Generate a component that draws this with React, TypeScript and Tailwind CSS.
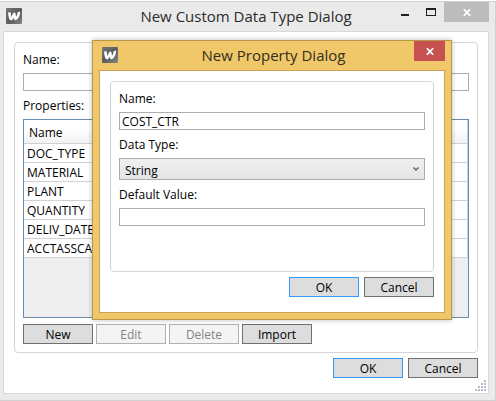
import React, { useState } from "react";

const propertyNames = ["DOC_TYPE", "MATERIAL", "PLANT", "QUANTITY", "DELIV_DATE", "ACCTASSCAT"];

function AppLogo() {
  return (
    <svg width="16" height="16" viewBox="0 0 16 16" aria-hidden="true" className="shrink-0">
      <defs>
        <linearGradient id="logoShade" x1="0" y1="0" x2="1" y2="1">
          <stop offset="0" stopColor="#77777a" />
          <stop offset="0.5" stopColor="#5c5c5f" />
          <stop offset="1" stopColor="#858588" />
        </linearGradient>
      </defs>
      <rect width="16" height="16" rx="1" fill="url(#logoShade)" />
      <path
        d="M2 4.6 L4.6 4.2 L5.4 9 L7.4 4.8 L9.4 4.8 L10 8.8 C11 7.6 11.4 6 11.6 4.2 L14.2 3.4 C14 7.6 12.4 11 9.8 12.2 C8.8 12.4 8.2 11.6 7.9 9.4 C7.2 11 6.2 12.3 4.8 12.3 C3 12.3 2.4 8.4 2 4.6 Z"
        fill="#fff"
        strokeLinejoin="round"
      />
    </svg>
  );
}

function CloseGlyph() {
  return (
    <svg width="8" height="7" viewBox="0 0 8 7" aria-hidden="true">
      <path d="M0.8 0.2 L7.2 6.8 M7.2 0.2 L0.8 6.8" stroke="#fff" strokeWidth="1.7" />
    </svg>
  );
}

type ButtonProps = { children: React.ReactNode; primary?: boolean; disabled?: boolean };

function DialogButton({ children, primary, disabled }: ButtonProps) {
  const look = disabled
    ? "border-[#adb2b5] bg-[#f4f4f4] text-[#838383]"
    : primary
      ? "border-[#3399ff] bg-[#dddddd] text-black"
      : "border-[#707070] bg-[#dddddd] text-black";
  return (
    <button
      type="button"
      disabled={disabled}
      className={`flex h-5 w-[70px] items-center justify-center border pt-0.5 leading-4 ${look}`}
    >
      {children}
    </button>
  );
}

function TextField({ id, label, initial = "" }: { id: string; label: string; initial?: string }) {
  const [value, setValue] = useState(initial);
  return (
    <>
      <label htmlFor={id} className="block h-7 leading-[30px]">
        {label}
      </label>
      <input
        id={id}
        type="text"
        value={value}
        onChange={(e) => setValue(e.target.value)}
        className="block h-[18px] w-full border border-[#abadb3] bg-white px-0.5 leading-4 outline-none"
      />
    </>
  );
}

function PropertyDialog() {
  return (
    <section
      role="dialog"
      aria-label="New Property Dialog"
      className="absolute top-10 right-11 left-[92px] flex flex-col border border-[#b8964a] bg-[#f0c869] shadow-[0_0_5px_rgba(0,0,0,0.25)]"
    >
      <header className="grid h-[29px] grid-cols-[1fr_auto_1fr] items-start pr-1.5 pl-[9px]">
        <div className="pt-1.5">
          <AppLogo />
        </div>
        <h2 className="text-[15px] leading-7 text-[#332d20]">New Property Dialog</h2>
        <button
          type="button"
          aria-label="Close"
          className="flex h-5 w-[31px] items-center justify-center justify-self-end bg-[#c75050]"
        >
          <CloseGlyph />
        </button>
      </header>
      <div className="mx-1.5 mb-1.5 border border-[#c9a456] bg-white p-2.5 pb-[15px]">
        <div className="rounded border border-[#d5d5d5] px-2 pt-0.5 pb-[45px]">
          <TextField id="property-name" label="Name:" initial="COST_CTR" />
          <label htmlFor="data-type" className="block h-7 leading-[30px]">
            Data Type:
          </label>
          <div className="grid">
            <select
              id="data-type"
              className="col-start-1 row-start-1 h-[22px] w-full appearance-none border border-[#acacac] bg-linear-to-b from-[#f0f0f0] to-[#e5e5e5] pt-0.5 pl-[5px] leading-5 outline-none"
            >
              <option>String</option>
            </select>
            <svg
              width="6"
              height="4"
              viewBox="0 0 6 4"
              aria-hidden="true"
              className="pointer-events-none col-start-1 row-start-1 mr-1.5 self-center justify-self-end"
            >
              <path d="M0.5 0.5 L3 3 L5.5 0.5" fill="none" stroke="#606060" strokeWidth="1.4" />
            </svg>
          </div>
          <TextField id="default-value" label="Default Value:" />
        </div>
        <div className="mt-[5px] flex justify-end gap-[5px]">
          <DialogButton primary>OK</DialogButton>
          <DialogButton>Cancel</DialogButton>
        </div>
      </div>
    </section>
  );
}

function ResizeGrip() {
  const dots = [
    [9, 0],
    [6, 3],
    [9, 3],
    [3, 6],
    [6, 6],
    [9, 6],
    [0, 9],
    [3, 9],
    [6, 9],
    [9, 9],
  ];
  return (
    <svg
      width="11"
      height="11"
      viewBox="0 0 11 11"
      aria-hidden="true"
      className="absolute right-0.5 bottom-0.5"
    >
      {dots.map(([x, y]) => (
        <rect key={`${x}-${y}`} x={x} y={y} width="2" height="2" fill="#b8bfcc" />
      ))}
    </svg>
  );
}

export default function App() {
  return (
    <div className="relative flex min-h-screen flex-col bg-white pt-px font-['Open_Sans','Noto_Sans',sans-serif] text-[12px] leading-4 text-black">
      <main className="flex flex-1 flex-col border-t border-r border-b border-[#d0d0d0] bg-[#eaeaea] pr-1.5 pb-1.5 pl-[3px]">
        <header className="grid h-[29px] grid-cols-[1fr_auto_1fr] items-start">
          <div className="pt-1.5 pl-[3px]">
            <AppLogo />
          </div>
          <h1 className="text-[15px] leading-7 text-[#2b2b2b]">New Custom Data Type Dialog</h1>
          <div className="flex justify-self-end">
            <button type="button" aria-label="Minimize" className="flex h-5 w-[27px] items-center justify-center pt-1.5">
              <span className="h-0.5 w-2 bg-[#1e1e1e]" />
            </button>
            <button type="button" aria-label="Maximize" className="flex h-5 w-[26px] items-center justify-center">
              <span className="h-2 w-2.5 border border-t-2 border-[#1e1e1e]" />
            </button>
            <button type="button" aria-label="Close" className="flex h-5 w-[45px] items-center justify-center bg-[#bcbcbc]">
              <CloseGlyph />
            </button>
          </div>
        </header>
        <div className="relative flex flex-1 flex-col border border-[#d9d9d9] bg-white p-2.5 pb-[15px]">
          <div className="flex flex-1 flex-col rounded border border-[#d5d5d5] px-2 pt-0.5 pb-2">
            <TextField id="type-name" label="Name:" />
            <div id="properties-label" className="h-7 leading-[30px]">
              Properties:
            </div>
            <div className="flex-1 border border-[#688caf] bg-[#efefef]">
              <table aria-labelledby="properties-label" className="w-full border-separate border-spacing-0">
                <thead>
                  <tr>
                    <th className="h-6 border-r border-b border-[#d0d0d0] bg-linear-to-b from-white from-40% to-[#f1f2f4] p-0 pt-0.5 pl-[5px] text-left font-normal">
                      Name
                    </th>
                  </tr>
                </thead>
                <tbody>
                  {propertyNames.map((name) => (
                    <tr key={name}>
                      <td className="h-[19px] border-r border-b border-[#d0d0d0] bg-white p-0 pt-0.5 pl-[3px]">{name}</td>
                    </tr>
                  ))}
                </tbody>
              </table>
            </div>
            <div className="mt-1.5 flex gap-[3px]">
              <DialogButton>New</DialogButton>
              <DialogButton disabled>Edit</DialogButton>
              <DialogButton disabled>Delete</DialogButton>
              <DialogButton>Import</DialogButton>
            </div>
          </div>
          <div className="mt-[5px] flex justify-end gap-[5px]">
            <DialogButton primary>OK</DialogButton>
            <DialogButton>Cancel</DialogButton>
          </div>
          <ResizeGrip />
        </div>
      </main>
      <PropertyDialog />
    </div>
  );
}
